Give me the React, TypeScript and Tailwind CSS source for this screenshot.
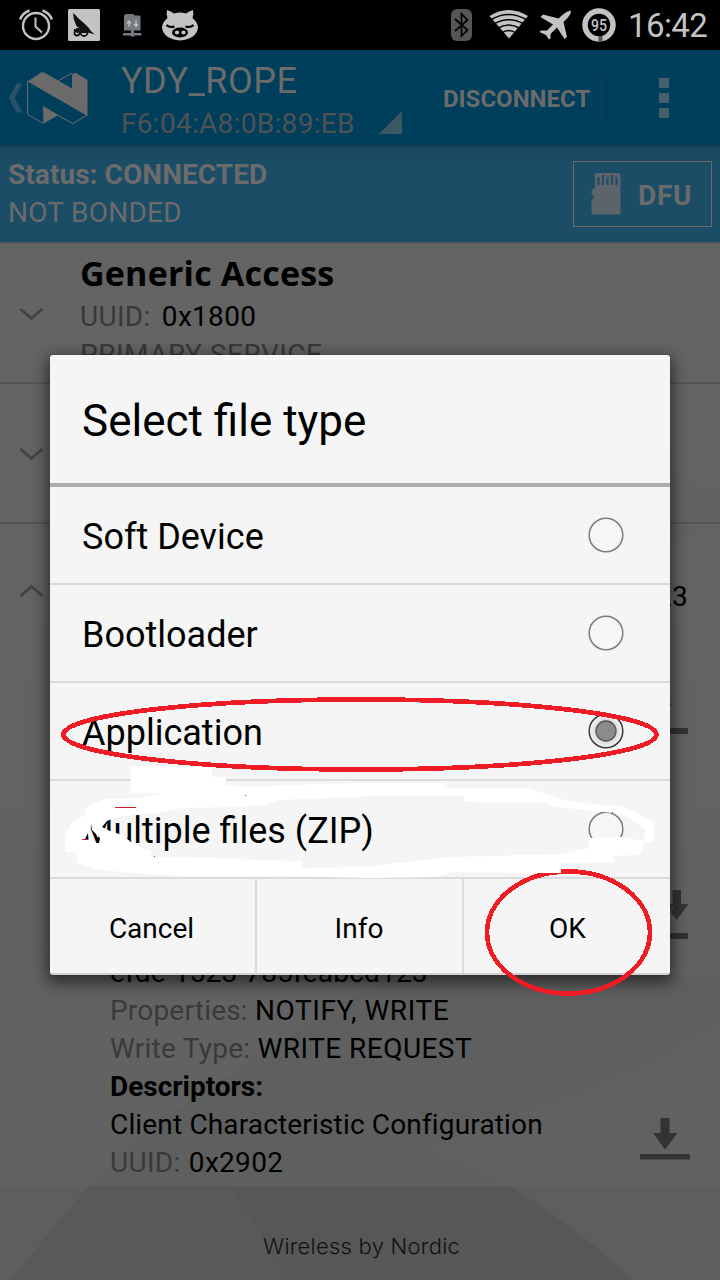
import React from "react";

const options = ["Soft Device", "Bootloader", "Application", "Multiple files (ZIP)"];

function StatusBar() {
  return (
    <div className="flex h-[50px] shrink-0 items-center justify-between bg-black">
      <svg className="h-[50px] w-[240px]" viewBox="0 0 240 50">
        <g fill="none" stroke="#c3c3c3">
          <circle cx="36" cy="26" r="13" strokeWidth="2.4" />
          <path d="M35.500 17.500v9l6.500 6" strokeWidth="2" />
          <path d="M20 19.500Q23 12.500 29.500 10.500M52 19.500Q49 12.500 42.500 10.500" strokeWidth="2.4" />
        </g>
        <rect x="68" y="9" width="32" height="32" rx="1.500" fill="#c3c3c3" />
        <path d="M73 13q3 2 5 5q6 5 10 9q2 4 7 7.500l-9-2.500q-7-2-10-7q-3-6-3-12z" fill="#111" />
        <g fill="none" stroke="#111" strokeWidth="1.800">
          <circle cx="77" cy="33" r="2.500" />
          <circle cx="84" cy="32.500" r="3.500" />
          <path d="M76 29l13 1.500M81 32h6M74 29.500l4 3" />
        </g>
        <path d="M126.500 14h6.500l2 1.500h4.500q1 0 1 1v14h-16.500v-14q0-2.500 2.500-2.500z" fill="#747a80" />
        <path d="M131 30h3v3h7.500v2.500h-7v1h-4v-1h-7.500v-2.500h8z" fill="#747a80" />
        <path d="M129 27v-5m-2 1.500l2-2.500l2 2.500M136 20v5.500m-2-1.500l2 2.500l2-2.500" fill="none" stroke="#c0c4c8" strokeWidth="1.300" />
        <path d="M167 10q4 1 7 3.500q6-2 12 0q3-2.500 7-3.500q1 4-.5 8q5.500 5 5.500 10q-2 11-18 12.500q-16-1.500-18-12.500q0-5 5.500-10q-1.500-4-.5-8z" fill="#c3c3c3" />
        <ellipse cx="180" cy="32.500" rx="8" ry="5" fill="#000" />
        <circle cx="177" cy="32.500" r="2.100" fill="#c3c3c3" />
        <circle cx="183.500" cy="32.500" r="2.100" fill="#c3c3c3" />
        <path d="M166.500 25q3 3 8 1.500M193.500 25q-3 3-8 1.500" fill="none" stroke="#000" strokeWidth="2.200" />
      </svg>
      <div className="flex items-center pr-[9px]">
        <svg className="h-[50px] w-[180px]" viewBox="448 0 180 50">
          <rect x="451" y="9" width="21" height="32" rx="6" fill="#565656" />
          <path d="M455 19l12.500 11l-6 6v-22l6 6l-12.500 11" fill="none" stroke="#000" strokeWidth="1.700" />
          <path d="M509 38.500L489.500 16Q508.500 4 528 16z" fill="#c3c3c3" />
          <g fill="none" stroke="#000" strokeWidth="1.500">
            <path d="M490.500 20Q508.500 9 527 20" />
            <path d="M494 24Q508.500 15.500 524 24" />
            <path d="M497.500 28.500Q508.500 21.500 520 28.500" />
            <path d="M501.500 33Q508.500 28 516 33" />
          </g>
          <path d="M571 10.500q-4 .5-8 4l-4.500 4l-15.500-4l-2.500 2.500l12.500 7.500l-6 6h-6l-1.500 1.500l6.500 3l3 4.500l1.500-1v-4.500l6.500-6.500l7.500 11.500l2.500-2l-3.500-15l4-4q3.500-4 3.500-7.500z" fill="#c3c3c3" />
          <circle cx="599" cy="25" r="14" fill="none" stroke="#c3c3c3" strokeWidth="5.500" />
          <path d="M598.500 36h4v5.700h-4z" fill="#555" />
          <text x="599" y="31" textAnchor="middle" fill="#c3c3c3" fontFamily="Roboto, sans-serif" fontWeight="500" fontSize="17" textLength="16" lengthAdjust="spacingAndGlyphs">95</text>
        </svg>
        <span className="w-[83px] whitespace-nowrap pt-[2px] text-[33px] leading-[50px] tracking-[-0.6px] text-[#c3c3c3]">16:42</span>
      </div>
    </div>
  );
}

function Header() {
  return (
    <header className="flex h-[97px] shrink-0 border-b-2 border-[#143c52] bg-[#003f5b]">
      <svg className="h-[95px] w-[110px] shrink-0" viewBox="0 50 110 95">
        <path d="M16.500 83.500h5.500l-7.300 14.500l7.300 14.500h-5.500l-7.700-14.500z" fill="#2b5367" />
        <path d="M27.500 81.500L87.500 116V80L76 73Q72 72.500 72 76V88.500L45 73Q43 72 41 72.500z" fill="#6b6b6b" />
        <path d="M43 106l15.500 9L43.500 123.500z" fill="#6b6b6b" />
        <path d="M27.500 81v33.500L43.500 123.500M58 115.500L73 123.500L87.500 115M58 81l14-8" fill="none" stroke="#6b6b6b" strokeWidth="1" />
      </svg>
      <div className="flex w-[293px] shrink-0 flex-col pl-[11px] pt-[9px]">
        <div className="h-[44px] whitespace-nowrap text-[36px] leading-[44px] tracking-[0.5px] text-[#6b6b6b]">YDY_ROPE</div>
        <div className="flex items-end">
          <span className="w-[258px] whitespace-nowrap text-[28px] leading-[42px] tracking-[0.3px] text-[#4e5254]">F6:04:A8:0B:89:EB</span>
          <svg className="mb-[11px] h-[23px] w-[23px] shrink-0" viewBox="0 0 23 23">
            <path d="M23 0v23H0z" fill="#3c5866" />
          </svg>
        </div>
      </div>
      <div className="flex grow items-center pl-[40px]">
        <span className="w-[163px] whitespace-nowrap pt-[2px] text-[24px] font-bold text-[#6b6b6b]">DISCONNECT</span>
        <div className="h-12 w-[2px] bg-[#06384e]" />
        <div className="ml-[51px] flex flex-col gap-[5px]">
          <i className="size-[10px] bg-[#455f6c]" />
          <i className="size-[10px] bg-[#455f6c]" />
          <i className="size-[10px] bg-[#455f6c]" />
        </div>
      </div>
    </header>
  );
}

function ConnectionStatus() {
  return (
    <section className="flex h-[95px] shrink-0 justify-between bg-linear-to-b from-[#19475d] to-[#1b4d66] to-20% pl-2 pr-2 pt-[9px] text-[28px] leading-[38px] text-[#6b6b6b]">
      <div className="whitespace-nowrap">
        <div className="font-bold tracking-[0.06px]">Status: CONNECTED</div>
        <div className="tracking-[0.25px]">NOT BONDED</div>
      </div>
      <div className="mt-[5px] flex h-[66px] w-[139px] items-center border border-[#6b6b6b]">
        <svg className="ml-[17px] h-[42px] w-[30px]" viewBox="0 0 30 42">
          <path fillRule="evenodd" d="M5.500 0H28q1.500 0 1.500 1.500V40q0 1.500-1.500 1.500H2q-1.500 0-1.500-1.500V27l2-1.500v-3L.5 21v-3L4 14V1.500Q4 0 5.500 0zM6.500 4v8h2V4zm4.500-2v10h2V2zm4.500 2v8h2V4zm4.500-2v10h2V2zm4.500 2v8h2V4z" fill="#5b646a" />
        </svg>
        <span className="ml-[17px] pt-[3px] font-bold tracking-[0.7px]">DFU</span>
      </div>
    </section>
  );
}

function Chevron({ up = false }: { up?: boolean }) {
  return (
    <svg className="h-[14px] w-[25px] shrink-0" viewBox="0 0 25 14">
      <path d={up ? "M1.500 12L12.500 2.500L23.500 12" : "M1.500 2L12.500 11.500L23.500 2"} fill="none" stroke="#434343" strokeWidth="2.800" />
    </svg>
  );
}

function Backdrop() {
  return (
    <svg className="absolute inset-0 h-full w-full" viewBox="0 242 720 1038" preserveAspectRatio="none">
      <defs>
        <linearGradient id="base" x1="0" y1="0" x2="0" y2="1">
          <stop offset="0" stopColor="#646464" />
          <stop offset="1" stopColor="#616161" />
        </linearGradient>
        <linearGradient id="fade" x1="0" y1="0" x2="0" y2="1">
          <stop offset="0" stopColor="#606362" stopOpacity="0" />
          <stop offset="1" stopColor="#606362" />
        </linearGradient>
      </defs>
      <rect y="242" width="720" height="1038" fill="url(#base)" />
      <path d="M640 400H720V520L640 560z" fill="url(#fade)" />
      <path d="M0 960H50L0 1000z" fill="#606362" />
      <path d="M10 1280L88 1186L135 1140L250 1060L390 975H720V1022Q620 1085 480 1125L560 1170L630 1280z" fill="#5e605f" />
      <path d="M320 1000H700Q600 1085 480 1125L300 1135z" fill="#5f5f5f" />
      <path d="M230 1186H510Q580 1230 632 1280H290z" fill="#595b5b" />
      <path d="M10 1280L88 1186H230L290 1280z" fill="#5b5d5c" />
      <path d="M480 1125Q620 1085 720 1022V1280H632Q580 1225 510 1186L430 1150z" fill="#606161" />
      <path d="M0 1186H720V1280H0z" fill="#000" opacity=".025" />
    </svg>
  );
}

function ServiceList() {
  return (
    <main className="relative h-[1038px] overflow-hidden border-t-2 border-[#595959]">
      <Backdrop />
      <div className="relative text-[28px] leading-[38px] tracking-[0.3px] text-black">
        <div className="flex h-[140px] border-b-2 border-[#555] pl-[19px]">
          <div className="pt-[63px]"><Chevron /></div>
          <div className="ml-9 whitespace-nowrap pt-[4px]">
            <h2 className="h-[50px] font-['Open_Sans'] text-[34px] font-bold leading-[50px] tracking-[0.2px]">Generic Access</h2>
            <div><span className="mr-[4px] text-[#383838]">UUID:</span> 0x1800</div>
            <div className="tracking-[0.5px] text-[#383838]">PRIMARY SERVICE</div>
          </div>
        </div>
        <div className="h-[140px] border-b-2 border-[#555] pl-[19px] pt-[63px]"><Chevron /></div>
        <div className="flex h-[432px] justify-between pl-[19px] pr-[30px]">
          <div className="pt-[60px]"><Chevron up /></div>
          <div className="flex flex-col items-end pt-[54px]">
            <span className="mr-[2px]">23</span>
            <svg className="mt-[79px] h-[40px] w-[50px]" viewBox="640 695 50 40">
              <path d="M640 728h48v6h-48zM668 700l4 5h-4z" fill="#333" />
            </svg>
            <svg className="mt-[155px] h-[50px] w-[50px]" viewBox="640 890 50 50">
              <path d="M672.500 890h8.500v14h7.500L676.500 920L665 904h7.500zM640 933h48v6h-48z" fill="#333" />
              <path d="M669 909q3-3 4-1l-3 5" fill="none" stroke="#555" />
            </svg>
          </div>
        </div>
        <div className="flex h-[230px] justify-between whitespace-nowrap pl-[110px] pr-[30px]">
          <div className="-mt-[2px]">
            <div className="tracking-[0.2px]">efde-1523-785feabcd123</div>
            <div><span className="tracking-[0.2px] text-[#3a3a3a]">Properties: </span><span className="tracking-[0.55px]">NOTIFY, WRITE</span></div>
            <div><span className="tracking-[0.25px] text-[#3a3a3a]">Write Type: </span><span className="tracking-[0.45px]">WRITE REQUEST</span></div>
            <div className="font-bold tracking-normal">Descriptors:</div>
            <div className="tracking-[0.16px]">Client Characteristic Configuration</div>
            <div><span className="text-[#3a3a3a]">UUID:</span> <span className="ml-[1px]">0x2902</span></div>
          </div>
          <svg className="mt-[162px] h-[42px] w-[50px]" viewBox="0 0 50 42">
            <path d="M20.500 0h9v15h8L25 31.500L13 15h7.500zM0 36h50v5.500H0z" fill="#333" />
          </svg>
        </div>
        <footer className="flex h-[94px] items-center justify-center pt-[26px] font-['Inter'] text-[22px] font-light leading-8 tracking-[0.25px] text-[#111]">
          <span className="whitespace-nowrap pl-[3px]">Wireless by Nordic</span>
        </footer>
      </div>
    </main>
  );
}

function Radio({ checked }: { checked: boolean }) {
  return (
    <svg className="size-9 shrink-0" viewBox="0 0 36 36">
      <defs>
        <radialGradient id="glow">
          <stop offset=".5" stopColor="#cfcfcf" />
          <stop offset="1" stopColor="#f8f8f8" />
        </radialGradient>
      </defs>
      <circle cx="18" cy="18" r="16.800" fill={checked ? "url(#glow)" : "#f6f6f6"} stroke={checked ? "#3c3c3c" : "#7c7c7c"} strokeWidth="1.500" />
      {checked && <circle cx="18" cy="18" r="10" fill="#8c8c8c" stroke="#555" strokeWidth="1.300" />}
    </svg>
  );
}

function Dialog() {
  return (
    <div className="absolute left-[50px] top-[355px] flex h-[620px] w-[620px] flex-col overflow-hidden rounded-[3px] border-b-2 border-[#d0d0d0] bg-[#f5f5f5] text-black shadow-[0_5px_15px_3px_rgba(0,0,0,0.55)]">
      <h1 className="h-[132px] shrink-0 border-b-4 border-[#ababab] pl-8 text-[44px] leading-[132px]">Select file type</h1>
      {options.map((label) => (
        <div key={label} className="flex h-[98px] shrink-0 items-center justify-between border-b-2 border-[#dbdbdb] pl-8 pr-[46px] text-[36px]">
          <span className="whitespace-nowrap pt-[3px] leading-[42px]">{label}</span>
          <Radio checked={label === "Application"} />
        </div>
      ))}
      <div className="flex h-[94px] text-[28px] leading-[90px]">
        <button className="w-[207px] border-r-2 border-[#dbdbdb] pr-[2px] pt-[5px]">Cancel</button>
        <button className="w-[207px] border-r-2 border-[#dbdbdb] pr-[1px] pt-[5px]">Info</button>
        <button className="grow pl-[1px] pt-[5px]">OK</button>
      </div>
    </div>
  );
}

function Markings() {
  return (
    <svg className="pointer-events-none absolute inset-0 h-[1280px] w-[720px]" viewBox="0 0 720 1280">
      <g fill="none" stroke="#ee1c24" strokeWidth="4.700" shapeRendering="crispEdges">
        <ellipse cx="360" cy="734.500" rx="296.500" ry="35" />
        <ellipse cx="568.500" cy="932.500" rx="81.500" ry="61" />
      </g>
      <path
        fill="#fff"
        fillRule="evenodd"
        d="M130 766L211.500 767L212 777H226V785L247 787L318 784L370 783H444L445 788H528L560 799L592 804L622 806L654 822V842L643 843V850L638 855L614 856V862L568 863H561V873H527L452 872L437 877L370 878L283 876L200 876.500L157 875L100 870L77 863L76 852H65L66 833L72 823L85 815L87 807L105 799L140 798L163 793H131z
        M646 829L622 814L557 807L545 803L464 802V796H370L280 800L263 805L237 807L183 808L157 813L117 817L107 821L102 827L112 832L123 835L133 844L151 851V857L217 858L255 860L302 861V868L370 867L395 863L453 857L560 854L578 850L589 848V838L622 837L643 841z
        M91 824L92 830L100 838L99 843.500H96L90.500 833z
        M85 839L88 833L89 840z"
      />
      <path d="M115 807.500h21M82 839.500h6M154 856.500h1M245 795.500h1M612 812.500h1" stroke="#d4202c" strokeWidth="1" fill="none" />
    </svg>
  );
}

export default function App() {
  return (
    <div className="relative flex h-[1280px] w-[720px] flex-col overflow-hidden bg-[#626262] font-['Roboto',sans-serif]">
      <StatusBar />
      <Header />
      <ConnectionStatus />
      <ServiceList />
      <Dialog />
      <Markings />
    </div>
  );
}
